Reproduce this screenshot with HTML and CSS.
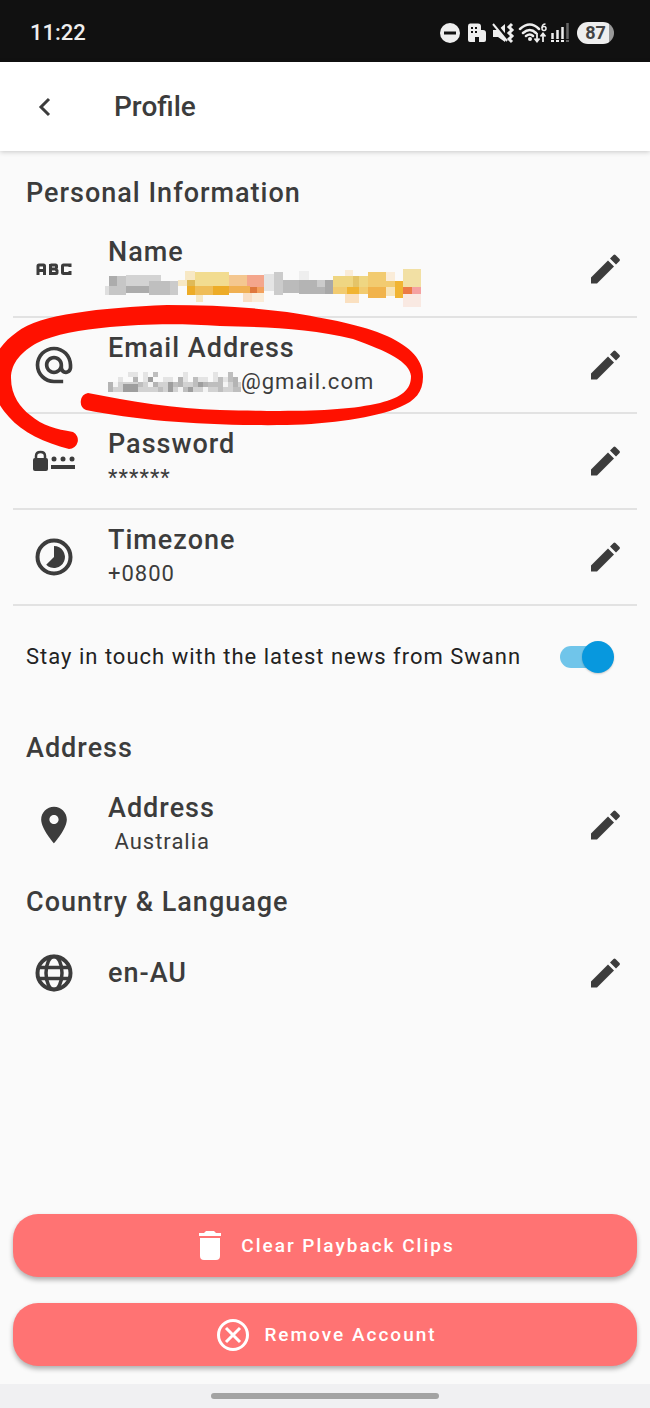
FILE: index.html
```html
<!DOCTYPE html>
<html lang="en">
<head>
    <meta charset="UTF-8">
    <meta name="viewport" content="width=device-width, initial-scale=1.0">
    <title>Profile</title>
    <link rel="stylesheet" href="styles.css">
</head>
<body>
    <svg class="defs" aria-hidden="true">
        <symbol id="pencil" viewBox="0 0 30 30">
            <path d="M0 23.500 L17 6.500 L23 12.500 L6 29.500 H0 Z M19 4.500 L22.500 1 Q23.500 0 24.500 1 L28.500 5 Q29.500 6 28.500 7 L25 10.500 Z"/>
        </symbol>
    </svg>

    <!-- Phone status bar -->
    <div class="status-bar">
        <span class="time">11:22</span>
        <div class="status-icons">
            <svg width="132" height="22" viewBox="0 0 132 22" fill="#eee">
                <circle cx="10" cy="11" r="10"/>
                <path d="M4 9.500h12v3H4z" fill="#111"/>
                <path d="M30 1.500h8q3 0 3 3V8h2q3 0 3 3v7q0 2-2 2h-5v-5h-4v5h-5q-2 0-2-2V4q0-2.500 2-2.500z"/>
                <path d="M31 5h2v2h-2zM35 5h2v2h-2zM31 9h2v2h-2zM35 9h2v2h-2z" fill="#111"/>
                <path d="M53 8h5l7-6v18l-7-5h-5z"/>
                <path d="M53 -1l14 17" stroke="#111" stroke-width="3"/>
                <path d="M53 2l14 17" stroke="#eee" stroke-width="2"/>
                <path d="M72 2l-3 3 3 3-3 3 3 3-3 3 3 3" fill="none" stroke="#eee" stroke-width="3"/>
                <path d="M80 7q10-9 19 0M83 11q7-6 13 0M86 14q4-3 7 0" fill="none" stroke="#eee" stroke-width="2.500" stroke-linecap="round"/>
                <circle cx="90" cy="17" r="2"/>
                <path d="M97 11v8M94.500 16.500l2.500 3 2.500-3M103 20v-8M100.500 14.500l2.500-3 2.500 3" fill="none" stroke="#eee" stroke-width="1.800"/>
                <path d="M105.500 2q-3.500 0-3.500 4" fill="none" stroke="#eee" stroke-width="1.500"/>
                <circle cx="104" cy="6.500" r="2" fill="none" stroke="#eee" stroke-width="1.500"/>
                <path d="M112.500 11v6M117.500 8v9M122.500 5v12" stroke="#eee" stroke-width="2.500"/>
                <path d="M127.500 1v16" stroke="#666" stroke-width="2.500"/>
                <path d="M111 18h3v2h-3zM116 18h3v2h-3zM121 18h3v2h-3z"/>
                <path d="M126 18h3v2h-3z" fill="#666"/>
            </svg>
            <span class="battery">87</span>
        </div>
    </div>

    <header>
        <button class="back-btn" aria-label="Back">
            <svg width="14" height="20" viewBox="0 0 14 20"><path d="M12 2L4 10l8 8" fill="none" stroke="#3c3c3c" stroke-width="3"/></svg>
        </button>
        <h1>Profile</h1>
    </header>

    <main>
        <section class="personal">
            <h2>Personal Information</h2>
            <div class="row">
                <div class="row-icon">
                    <svg width="36" height="12" viewBox="0 0 36 12" fill="none" stroke="#3c3c3c" stroke-width="3">
                        <path d="M2 12V3Q2 2 3 2H7.500Q8.500 2 8.500 3V12M2 7.500H8.500M14.500 2H19.500Q20.500 2 20.500 3V4.500L19.500 6L21 7.500V9.500Q21 10.500 20 10.500H14.500V1M14.500 6H20M34 4V2H27.500Q26.500 2 26.500 3V9.500Q26.500 10.500 27.500 10.500H34V8"/>
                    </svg>
                </div>
                <div class="row-text">
                    <h3>Name</h3>
                    <p>
                        <svg class="mosaic" width="313" height="34" viewBox="0 0 939 102" shape-rendering="crispEdges">
                            <g transform="translate(-54 -30)">
                                <path fill="#dfdfdf" d="M45 82h13v26H45z"/>
                                <path fill="#acacac" d="M58 52h22v30H58zM107 82h71v20h-71z"/>
                                <path fill="#c6c6c6" d="M58 82h22v26H58zM80 52h27v56H80z"/>
                                <path fill="#d3d3d3" d="M107 48h105v34H107z"/>
                                <path fill="#bfbfbf" d="M178 65h62v43h-62z"/>
                                <path fill="#cbcbcb" d="M240 65h25v43h-25z"/>
                                <path fill="#f7e8c4" d="M265 62h25v20h-25zM285 35h30v27h-30zM317 108h23v22h-23z"/>
                                <path fill="#dfba58" d="M290 62h25v20h-25z"/>
                                <path fill="#edac28" d="M290 82h25v26h-25zM370 82h47v26h-47z"/>
                                <path fill="#f2dc90" d="M315 40h102v42H315z"/>
                                <path fill="#efbd58" d="M315 82h55v26h-55z"/>
                                <path fill="#f4c790" d="M417 48h53v34h-53z"/>
                                <path fill="#f4a68c" d="M470 48h52v37h-52z"/>
                                <path fill="#f0b052" d="M417 82h63v20h-63z"/>
                                <path fill="#f9dfc4" d="M460 102h25v28h-25z"/>
                            </g>
                            <g transform="translate(426 -30)">
                                <path fill="#df783c" d="M0 85h20v17H0z"/>
                                <path fill="#f3a05c" d="M20 85h22v17H20z"/>
                                <path fill="#faecd8" d="M5 102h37v26H5zM285 33h23v17h-23zM408 40h27v25h-27z"/>
                                <path fill="#e4e4e4" d="M42 46h30v49H42z"/>
                                <path fill="#cbcbcb" d="M72 40h26v68H72zM200 62h25v30h-25z"/>
                                <path fill="#bbb" d="M98 62h50v40H98z"/>
                                <path fill="#eee" d="M148 35h28v27h-28z"/>
                                <path fill="#b4b4b4" d="M148 62h52v43h-52zM200 85h25v20h-25z"/>
                                <path fill="#a8a8a8" d="M225 62h25v43h-25z"/>
                                <path fill="#efd682" d="M250 50h58v35h-58zM328 50h27v35h-27z"/>
                                <path fill="#e4c468" d="M308 50h20v35h-20z"/>
                                <path fill="#f2cb70" d="M250 85h40v20h-40zM328 85h27v20h-27zM355 40h53v45h-53zM408 65h27v20h-27z"/>
                                <path fill="#f1b432" d="M290 85h38v20h-38zM435 65h23v52h-23z"/>
                                <path fill="#fae0c0" d="M285 105h43v28h-43z"/>
                                <path fill="#f1b34c" d="M355 85h53v32h-53z"/>
                                <path fill="#f7e4b8" d="M408 85h27v27h-27z"/>
                                <path fill="#f2e0a4" d="M458 30h54v55h-54z"/>
                                <path fill="#ec7a46" d="M458 85h27v19h-27z"/>
                                <path fill="#f5a2a2" d="M485 85h27v19h-27z"/>
                                <path fill="#f9e9e2" d="M458 104h54v40h-54z"/>
                            </g>
                        </svg>
                    </p>
                </div>
                <button class="edit-btn" aria-label="Edit name"><svg width="30" height="30"><use href="#pencil"/></svg></button>
            </div>

            <div class="row">
                <div class="row-icon">
                    <svg width="44" height="44" viewBox="0 0 24 24" fill="#3c3c3c"><path d="M12 2C6.480 2 2 6.480 2 12s4.480 10 10 10h5v-2h-5c-4.340 0-8-3.660-8-8s3.660-8 8-8 8 3.660 8 8v1.430c0 .790-.710 1.570-1.500 1.570s-1.500-.780-1.500-1.570V12c0-2.760-2.240-5-5-5s-5 2.240-5 5 2.240 5 5 5c1.380 0 2.640-.560 3.540-1.470.650.890 1.770 1.470 2.960 1.470 1.970 0 3.500-1.600 3.500-3.570V12c0-5.520-4.480-10-10-10zm0 13c-1.660 0-3-1.340-3-3s1.340-3 3-3 3 1.340 3 3-1.340 3-3 3z"/></svg>
                </div>
                <div class="row-text">
                    <h3>Email Address</h3>
                    <p>
                        <svg class="mosaic" width="133" height="21" viewBox="0 0 399 63" shape-rendering="crispEdges">
                            <path fill="#d2d2d2" d="M15 30h384v30H15z"/>
                            <path fill="#b4b4b4" d="M0 30h15v30H0zM75 15h15v15H75zM135 30h15v15h-15zM210 15h15v30h-15zM285 30h15v15h-15zM375 15h15v30h-15z"/>
                            <path fill="#e4e4e4" d="M30 15h15v15H30zM60 0h30v15H60zM105 0h15v30h-15zM165 15h30v15h-30zM225 0h15v30h-15zM270 15h30v15h-30zM315 0h15v30h-15zM345 15h15v15h-15z"/>
                            <path fill="#9e9e9e" d="M45 36h45v24H45zM120 15h15v15h-15zM180 30h15v30h-15zM240 45h15v15h-15zM270 30h15v15h-15z"/>
                            <path fill="#bebebe" d="M90 30h15v15H90zM135 0h15v15h-15zM150 45h15v15h-15zM195 30h15v15h-15zM225 45h15v15h-15zM255 15h15v30h-15zM300 30h30v15h-30zM330 15h15v45h-15zM360 0h15v30h-15zM375 45h24v15h-24z"/>
                            <path fill="#f4f4f4" d="M15 30h15v15H15zM120 30h15v15h-15zM210 45h15v15h-15zM285 45h15v15h-15zM345 30h15v15h-15z"/>
                        </svg>@gmail.com
                    </p>
                </div>
                <button class="edit-btn" aria-label="Edit email"><svg width="30" height="30"><use href="#pencil"/></svg></button>
            </div>

            <div class="row">
                <div class="row-icon">
                    <svg width="44" height="22" viewBox="0 0 44 22" fill="#3c3c3c">
                        <path d="M4 9V6q0-4 4.500-4T13 6v3" fill="none" stroke="#3c3c3c" stroke-width="2.500"/>
                        <rect x="1" y="8" width="15" height="13" rx="2"/>
                        <circle cx="22" cy="9" r="2.500"/><circle cx="31" cy="9" r="2.500"/><circle cx="40" cy="9" r="2.500"/>
                        <path d="M19 15h24v4H19z"/>
                    </svg>
                </div>
                <div class="row-text">
                    <h3>Password</h3>
                    <p>******</p>
                </div>
                <button class="edit-btn" aria-label="Edit password"><svg width="30" height="30"><use href="#pencil"/></svg></button>
            </div>

            <div class="row">
                <div class="row-icon">
                    <svg width="38" height="38" viewBox="0 0 38 38">
                        <circle cx="19" cy="19" r="16.500" fill="none" stroke="#3c3c3c" stroke-width="4"/>
                        <path d="M19 8a11 11 0 1 1-7.800 18.800L19 19z" fill="#3c3c3c"/>
                    </svg>
                </div>
                <div class="row-text">
                    <h3>Timezone</h3>
                    <p>+0800</p>
                </div>
                <button class="edit-btn" aria-label="Edit timezone"><svg width="30" height="30"><use href="#pencil"/></svg></button>
            </div>

            <!-- Hand-drawn ring around the email row -->
            <svg class="marker" width="430" height="150" viewBox="0 303 430 150" aria-hidden="true">
                <path fill="#ff1100" d="M88 393C130 401 175 409 220 410C300 412 345 411 380 403C402 397 411 390 411 376C410 362 387 351 353 339C310 328 265 327 220 326C180 323 140 324 110 327C80 330 55 334 37 343C22 351 11 363 11 378C11 396 21 408 30 415C43 426 56 429 73 432A9 9 0 0 1 69 449C45 443 22 432 9 417C-3 404-9 390-9 376C-8 355 3 342 17 332C40 314 100 308 167 305C210 305 250 307 287 312C330 319 362 325 387 336C411 347 423 360 423 377C423 392 415 401 400 407C375 418 330 424 287 425C210 426 140 421 86 410A9 9 0 0 1 88 393Z"/>
            </svg>
        </section>

        <div class="news">
            <label for="news">Stay in touch with the latest news from Swann</label>
            <input type="checkbox" id="news" class="toggle" checked>
        </div>

        <section>
            <h2>Address</h2>
            <div class="row">
                <div class="row-icon">
                    <svg width="44" height="44" viewBox="0 0 24 24" fill="#3c3c3c"><path d="M12 2C8.130 2 5 5.130 5 9c0 5.250 7 13 7 13s7-7.750 7-13c0-3.870-3.130-7-7-7zm0 9.500c-1.380 0-2.500-1.120-2.500-2.500s1.120-2.500 2.500-2.500 2.500 1.120 2.500 2.500-1.120 2.500-2.500 2.500z"/></svg>
                </div>
                <div class="row-text">
                    <h3>Address</h3>
                    <p>&nbsp;Australia</p>
                </div>
                <button class="edit-btn" aria-label="Edit address"><svg width="30" height="30"><use href="#pencil"/></svg></button>
            </div>
        </section>

        <section>
            <h2>Country &amp; Language</h2>
            <div class="row short">
                <div class="row-icon">
                    <svg width="38" height="38" viewBox="0 0 38 38" fill="none" stroke="#3c3c3c" stroke-width="4">
                        <circle cx="19" cy="19" r="16.500"/>
                        <ellipse cx="19" cy="19" rx="8" ry="16.500" stroke-width="3.500"/>
                        <path d="M4 13.500h30M4 24.500h30" stroke-width="3.500"/>
                    </svg>
                </div>
                <div class="row-text">
                    <h3>en-AU</h3>
                </div>
                <button class="edit-btn" aria-label="Edit language"><svg width="30" height="30"><use href="#pencil"/></svg></button>
            </div>
        </section>
    </main>

    <div class="actions">
        <button class="danger-btn">
            <svg width="22" height="29" viewBox="0 0 22 29" fill="#fff"><path d="M0 2h5l2-2h8l2 2h5v3H0zM1 7h20v18q0 4-4 4H5q-4 0-4-4z"/></svg>
            Clear Playback Clips
        </button>
        <button class="danger-btn close">
            <svg width="32" height="32" viewBox="0 0 32 32" fill="none" stroke="#fff" stroke-width="3"><circle cx="16" cy="16" r="14.500"/><path d="M9 9l14 14M23 9L9 23"/></svg>
            Remove Account
        </button>
    </div>

    <div class="nav-bar"><span></span></div>
</body>
</html>
```

FILE: styles.css
```css
* {
    box-sizing: border-box;
}

body {
    font-family: Roboto, "Liberation Sans", sans-serif;
    margin: 0;
    min-height: 100vh;
    display: flex;
    flex-direction: column;
    background-color: #fafafa;
    color: #3c3c3c;
}

h1, h2, h3, p {
    margin: 0;
}

h1, h2, h3 {
    font-size: 27px;
    font-weight: 500;
    line-height: 34px;
    letter-spacing: 1px;
}

button {
    font-family: inherit;
    border: none;
    cursor: pointer;
}

svg {
    display: block;
}

.defs {
    position: absolute;
    width: 0;
    height: 0;
}

.status-bar {
    display: flex;
    justify-content: space-between;
    align-items: center;
    height: 62px;
    padding: 4px 36px 0 30px;
    background-color: #111;
    color: #eee;
}

.time {
    font-size: 22px;
    font-weight: 500;
    line-height: 28px;
}

.status-icons {
    display: flex;
    align-items: center;
    gap: 5px;
}

.battery {
    width: 37px;
    border-radius: 11px;
    background: linear-gradient(to right, #eee 86%, #999 86%);
    color: #444;
    font-size: 18px;
    font-weight: 700;
    line-height: 22px;
    text-align: center;
}

header {
    position: relative;
    display: flex;
    align-items: center;
    height: 89px;
    padding: 0 20px;
    background-color: white;
    box-shadow: 0 1px 5px rgba(0, 0, 0, 0.2);
}

header h1 {
    margin-left: 46px;
    font-size: 28px;
    letter-spacing: 0;
}

.back-btn {
    display: flex;
    justify-content: center;
    width: 48px;
    padding: 14px 0;
    background: none;
}

main {
    flex: 1;
    padding: 0 13px;
}

section h2 {
    padding: 12px 13px;
}

.personal {
    position: relative;
    padding-top: 13px;
}

.row {
    display: flex;
    align-items: center;
    height: 96px;
}

.personal .row {
    border-bottom: 2px solid #e2e2e2;
}

.row.short {
    height: 84px;
}

.row-icon {
    display: flex;
    justify-content: center;
    width: 82px;
}

.row-text {
    flex: 1;
    padding-left: 13px;
}

.row-text p {
    display: flex;
    align-items: center;
    height: 34px;
    font-size: 22px;
    line-height: 34px;
    letter-spacing: 1px;
}

.mosaic {
    overflow: visible;
}

.edit-btn {
    padding: 16px;
    background: none;
}

.edit-btn svg {
    fill: #3c3c3c;
}

.marker {
    position: absolute;
    left: -13px;
    top: 152px;
    pointer-events: none;
}

.news {
    display: flex;
    justify-content: space-between;
    align-items: center;
    height: 101px;
    margin-bottom: 12px;
    padding: 0 31px 0 13px;
    color: #222;
    font-size: 22px;
    letter-spacing: 1px;
}

.toggle {
    appearance: none;
    display: flex;
    align-items: center;
    justify-content: flex-end;
    width: 46px;
    height: 22px;
    margin: 0;
    background-color: #70c5ea;
    border-radius: 11px;
    cursor: pointer;
}

.toggle::before {
    content: "";
    flex-shrink: 0;
    width: 32px;
    height: 32px;
    margin-right: -8px;
    border-radius: 50%;
    background-color: #0798de;
    box-shadow: 0 1px 2px rgba(0, 0, 0, 0.2);
}

.actions {
    display: flex;
    flex-direction: column;
    gap: 26px;
    padding: 0 13px 18px;
}

.danger-btn {
    display: flex;
    justify-content: center;
    align-items: center;
    gap: 20px;
    height: 63px;
    padding: 0 6px 0 10px;
    background-color: #ff7373;
    color: white;
    border-radius: 25px;
    box-shadow: 0 3px 5px rgba(0, 0, 0, 0.3);
    font-size: 19px;
    font-weight: 500;
    letter-spacing: 2px;
}

.danger-btn.close {
    gap: 15px;
}

.nav-bar {
    display: flex;
    justify-content: center;
    align-items: center;
    height: 24px;
    background-color: #f0f0f2;
}

.nav-bar span {
    width: 35%;
    height: 6px;
    border-radius: 3px;
    background-color: #a3a3a3;
}
```
